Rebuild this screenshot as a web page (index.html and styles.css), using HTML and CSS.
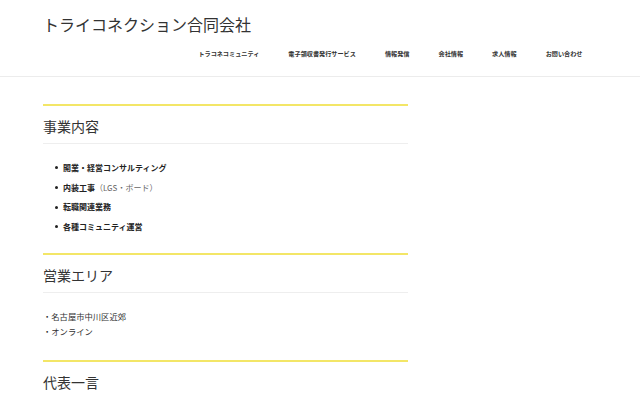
FILE: index.html
```html
<!DOCTYPE html>
<html lang="ja">
<head>
<meta charset="utf-8">
<title>トライコネクション合同会社</title>
<link rel="stylesheet" href="styles.css">
</head>
<body>
<header class="site-header">
  <div class="container">
    <div class="site-title">トライコネクション合同会社</div>
    <nav class="nav">
      <a class="nav-item">トラコネコミュニティ</a>
      <a class="nav-item">電子領収書発行サービス</a>
      <a class="nav-item">情報発信</a>
      <a class="nav-item">会社情報</a>
      <a class="nav-item">求人情報</a>
      <a class="nav-item">お問い合わせ</a>
    </nav>
  </div>
</header>
<main class="container">
  <div class="content">
    <section class="section">
      <h2 class="section-title">事業内容</h2>
      <ul class="biz-list">
        <li class="biz-item"><span class="dot"></span><span>開業・経営コンサルティング</span></li>
        <li class="biz-item"><span class="dot"></span><span>内装工事<span class="note">（LGS・ボード）</span></span></li>
        <li class="biz-item"><span class="dot"></span><span>転職関連業務</span></li>
        <li class="biz-item"><span class="dot"></span><span>各種コミュニティ運営</span></li>
      </ul>
    </section>
    <section class="section">
      <h2 class="section-title">営業エリア</h2>
      <p class="area">・名古屋市中川区近郊<br>・オンライン</p>
    </section>
    <section class="section">
      <h2 class="section-title">代表一言</h2>
    </section>
  </div>
</main>
</body>
</html>
```

FILE: styles.css
```css
html, body {
  margin: 0;
  padding: 0;
  background: #fff;
}
body {
  font-family: "Noto Sans CJK JP", "Noto Sans", sans-serif;
  color: #333;
}
.container {
  width: 554px;
  margin: 0 auto;
}
.site-header {
  border-bottom: 1px solid #ececec;
  padding: 12px 0 17px;
}
.site-title {
  font-size: 16px;
  line-height: 24px;
  color: #333;
}
.nav {
  display: flex;
  justify-content: flex-end;
  margin-top: 12.5px;
}
.nav-item {
  font-size: 6.15px;
  line-height: 10px;
  font-weight: bold;
  color: #333;
  padding: 0 14.5px;
}
.content {
  width: 365px;
  padding-top: 27.5px;
}
.section {
  border-top: 2px solid #f3e667;
}
.section-title {
  margin: 0;
  font-size: 14px;
  font-weight: normal;
  line-height: 20px;
  padding: 10px 0 7px;
  border-bottom: 1px solid #eeeeee;
  color: #333;
}
.biz-list {
  list-style: none;
  margin: 14px 0 16px;
  padding: 0;
}
.biz-item {
  display: flex;
  align-items: center;
  font-size: 8px;
  line-height: 19.7px;
  font-weight: bold;
  color: #222;
}
.dot {
  width: 3px;
  height: 3px;
  border-radius: 50%;
  background: #222;
  margin-left: 11.5px;
  margin-right: 5.5px;
}
.note {
  font-weight: normal;
  color: #666;
}
.area {
  margin: 16px 0 20px;
  font-size: 8.3px;
  line-height: 15.6px;
  color: #333;
}
.section:last-child .section-title {
  padding-bottom: 9px;
}
```
